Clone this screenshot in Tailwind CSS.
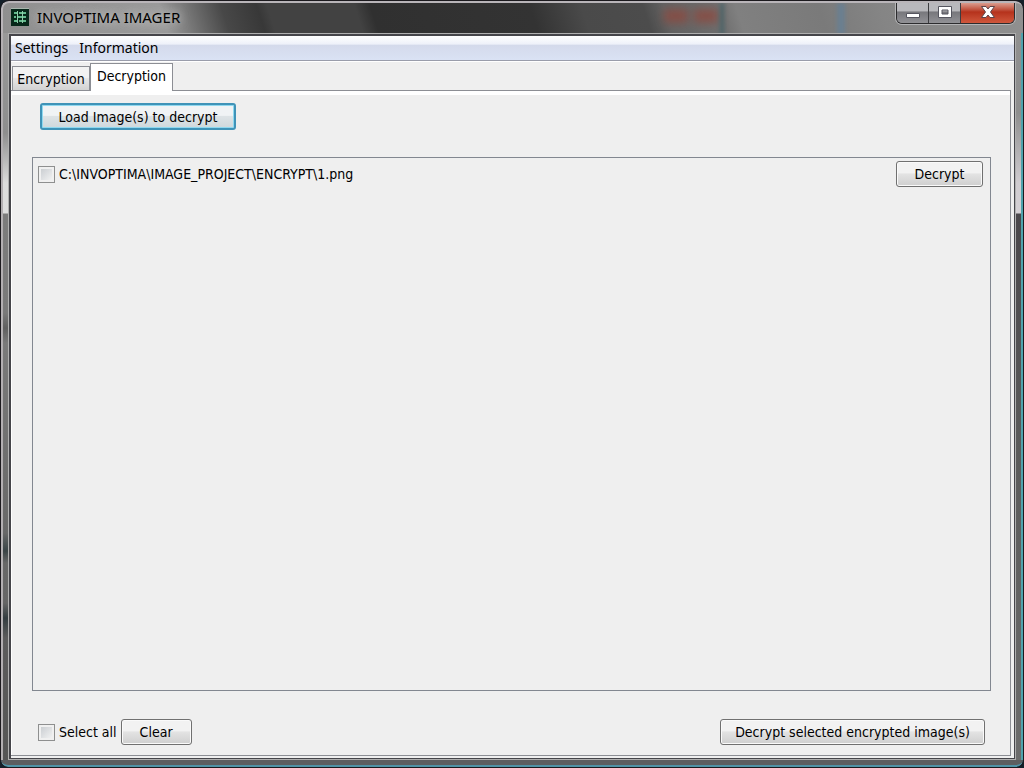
<!DOCTYPE html>
<html lang="en">
<head>
  <meta charset="UTF-8" />
  <meta name="viewport" content="width=device-width, initial-scale=1.0" />
  <title>INVOPTIMA IMAGER</title>
  <script src="https://cdn.jsdelivr.net/npm/@tailwindcss/browser@4"></script>
</head>
<body class="bg-[#14202a] text-black text-sm font-['DejaVu_Sans_Condensed','DejaVu_Sans',sans-serif]">
  <div class="min-h-screen flex flex-col overflow-hidden rounded-lg border border-[#1c1a1e]">

    <!-- Title bar -->
    <header class="relative h-8 flex items-center overflow-hidden rounded-t-lg border-t-2 border-l-2 border-[#b9b5b9] bg-linear-[72deg,#8f8f8f_0%,#9a9a9a_16%,#707070_19%,#484848_22%,#383838_25.5%,#424242_26.5%,#424242_35%,#303030_36.5%,#333333_52%,#4a4a4a_57%,#4c4c4c_63%,#626262_65%,#6e6e6e_70%,#808080_72%,#7a7a7a_80%,#858585_86%,#909090_100%] pl-2 pb-0.5">
      <div class="absolute left-[661px] top-1.5 h-3.5 w-6 bg-[#8c4a40]/80 blur-xs"></div>
      <div class="absolute left-[691px] top-1.5 h-3.5 w-6 bg-[#8c4a40]/80 blur-xs"></div>
      <div class="absolute left-[717px] top-0 h-8 w-1 bg-[#4a6468] blur-[2px]"></div>
      <div class="absolute left-[834px] top-0 h-8 w-2 bg-[#6a7f90] blur-[2px]"></div>
      <svg class="size-[18px] shrink-0" viewBox="0 0 18 18">
        <path d="M0 0h18v18H0z" fill="#06281a" />
        <path d="M3 4h3v2H3zM8 4h3v2H8zM12 4h3v2h-3zM3 8h2v2H3zM7 8h4v2H7zM12 8h3v2h-3zM3 12h4v2H3zM8 12h3v2H8zM12 12h3v2h-3z" fill="#62b98c" />
        <path d="M6.500 3v12M11.500 3v12" stroke="#8fcfab" stroke-width="1" />
        <path d="M0 .5h18" stroke="#a9b8ae" />
      </svg>
      <h1 class="relative ml-2 text-[15px] leading-5 font-['Noto_Sans',sans-serif] text-shadow-[0_0_8px_#c8c8c8,0_0_12px_#b4b4b4]">INVOPTIMA IMAGER</h1>
      <div class="absolute right-2 -top-0.5 flex h-[23px] overflow-hidden rounded-b-md border border-t-0 border-[#2c2c2e] shadow-[0_0_0_1px_#b4b4b6]">
        <button aria-label="Minimize" class="w-8 flex items-center justify-center border-r border-[#3c3c40] bg-linear-to-b from-[#b8b8bc] from-45% via-[#77777c] via-50% to-[#929296]">
          <svg class="w-4 h-4" viewBox="0 0 16 16"><path d="M1.500 9.500h13v4h-13z" fill="#fff" stroke="#55555f" /></svg>
        </button>
        <button aria-label="Maximize" class="w-8 flex items-center justify-center border-r border-[#3c3c40] bg-linear-to-b from-[#b8b8bc] from-45% via-[#77777c] via-50% to-[#929296]">
          <svg class="w-4 h-4" viewBox="0 0 16 16"><path fill-rule="evenodd" d="M1.500 2.500h13v11h-13zM5 6h6v4H5z" fill="#fff" stroke="#55555f" /></svg>
        </button>
        <button aria-label="Close" class="w-[53px] flex items-center justify-center bg-linear-to-b from-[#d99a8c] from-10% via-[#b5321c] via-50% to-[#d0573c]">
          <svg class="w-4 h-4" viewBox="0 0 16 16"><path d="M1.500 2.500h4.500l2 2.500 2-2.500h4.500l-4 5.500 4 5.500H10L8 11l-2 2.500H1.500l4-5.500z" fill="#fff" stroke="#5c4448" /></svg>
        </button>
      </div>
    </header>

    <div class="flex flex-1">
      <!-- Left edge of the glass frame -->
      <div class="w-[7px] border-l-2 border-[#b3afb2] bg-linear-[180deg,#999999_0px,#8e8e8e_100px,#dcdcdc_150px,#dedede_180px,#7c7c7c_181px,#7a7a7a_280px,#606060_295px,#7a7a7a_310px,#686868_500px,#3a4446_518px,#686868_530px,#666666_570px,#343d40_585px,#5c5c5c_605px,#555555_100%]"></div>

      <main class="flex-1 flex flex-col border border-[#b0b0b0] bg-[#efefef]">
        <div class="flex-1 flex flex-col border-2 border-r border-b border-[#45454a]">
          <nav class="flex h-[25px] items-center gap-[11px] border-b border-[#9a9dab] bg-linear-[180deg,#ffffff_0%,#eef1f9_34%,#d4daeb_38%,#dae2f4_100%] pl-1 font-['Noto_Sans',sans-serif]">
            <button>Settings</button>
            <button>Information</button>
          </nav>

          <!-- Tabs -->
          <div class="flex items-end border-t border-white pt-px pl-px" role="tablist">
            <button role="tab" aria-selected="false" class="h-6 w-[78px] border border-b-0 border-[#8c8e94] bg-linear-to-b from-[#f2f2f2] from-45% via-[#e6e6e6] via-50% to-[#d2d2d2]">Encryption</button>
            <button role="tab" aria-selected="true" class="relative -mb-px h-7 w-[83px] border border-b-0 border-[#8c8e94] bg-white pb-1">Decryption</button>
          </div>

          <section class="flex-1 flex flex-col border border-l-0 border-[#8c8e94] mr-[3px] mb-0.5" role="tabpanel">
            <div class="flex-1 flex flex-col border-t-4 border-l border-white pl-5 pr-[19px] pb-2.5">
              <div class="flex pl-2 pt-2">
                <button class="h-[27px] w-[196px] rounded-[3px] border-2 border-[#3f93b8] bg-linear-to-b from-[#f0f3f5] from-45% via-[#dde3e6] via-50% to-[#cfd8dc] shadow-[inset_0_0_0_1px_#8fd8ef]">Load Image(s) to decrypt</button>
              </div>

              <div class="mt-[27px] flex-1 border border-[#828790] p-[3px] pr-[7px]">
                <div class="flex items-center justify-between">
                  <label class="flex items-center gap-1 pl-0.5">
                    <input type="checkbox" class="size-[17px] appearance-none border border-[#8e8f8f] bg-linear-to-br from-[#c4c8cc] to-[#f8f8f8] shadow-[inset_0_0_0_2px_#f0f0f0]" />
                    C:\INVOPTIMA\IMAGE_PROJECT\ENCRYPT\1.png
                  </label>
                  <button class="h-[26px] w-[87px] rounded-[3px] border border-[#707070] bg-linear-to-b from-[#f2f2f2] from-45% via-[#e3e3e3] via-50% to-[#cfcfcf] shadow-[inset_0_0_0_1px_#fafafa]">Decrypt</button>
                </div>
              </div>

              <div class="mt-7 flex items-center pl-1.5 pr-1.5">
                <label class="flex items-center gap-1">
                  <input type="checkbox" class="size-[17px] appearance-none border border-[#8e8f8f] bg-linear-to-br from-[#c4c8cc] to-[#f8f8f8] shadow-[inset_0_0_0_2px_#f0f0f0]" />
                  Select all
                </label>
                <button class="ml-1 h-[26px] w-[71px] rounded-[3px] border border-[#707070] bg-linear-to-b from-[#f2f2f2] from-45% via-[#e3e3e3] via-50% to-[#cfcfcf] shadow-[inset_0_0_0_1px_#fafafa]">Clear</button>
                <button class="ml-auto h-[26px] w-[265px] rounded-[3px] border border-[#707070] bg-linear-to-b from-[#f2f2f2] from-45% via-[#e3e3e3] via-50% to-[#cfcfcf] shadow-[inset_0_0_0_1px_#fafafa]">Decrypt selected encrypted image(s)</button>
              </div>
            </div>
          </section>
        </div>
      </main>

      <!-- Right edge of the glass frame -->
      <div class="w-[7px] border-r-2 border-[#4fa3ad] bg-linear-[180deg,#909090_0px,#8e8e8e_80px,#d0ccd0_150px,#d4d0d4_180px,#4a474b_181px,#5a5a5a_400px,#6c6c6c_100%]"></div>
    </div>

    <div class="h-[7px] rounded-b-lg border-b-2 border-[#4f93a6] bg-[#5c5e60]"></div>
  </div>
</body>
</html>
